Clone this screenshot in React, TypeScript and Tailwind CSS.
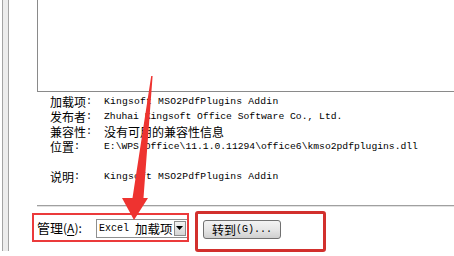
import React from 'react';

const Cjk: React.FC<{ children: React.ReactNode }> = ({ children }) => (
  <span className="inline-block h-[15px] leading-[15px] overflow-hidden align-top font-['Noto_Sans_CJK_SC',sans-serif] text-[12px]">
    {children}
  </span>
);

interface DetailRow {
  label: string;
  value: React.ReactNode;
  wide?: boolean;
}

const rows: (DetailRow | null)[] = [
  { label: '加载项', value: 'Kingsoft MSO2PdfPlugins Addin', wide: true },
  { label: '发布者', value: 'Zhuhai Kingsoft Office Software Co., Ltd.' },
  { label: '兼容性', value: <Cjk>没有可用的兼容性信息</Cjk> },
  { label: '位置', value: 'E:\\WPS Office\\11.1.0.11294\\office6\\kmso2pdfplugins.dll' },
  null,
  { label: '说明', value: 'Kingsoft MSO2PdfPlugins Addin', wide: true },
];

const App: React.FC = () => {
  return (
    <div className="relative w-[454px] h-[256px] overflow-hidden bg-white flex text-black">
      {/* window frame strip */}
      <div className="ml-[2px] w-[7px] h-[251px] shrink-0 border-x border-[#a3a3a3] bg-[#ececec]" />

      <div className="flex-1 min-w-0 flex flex-col">
        {/* add-in list */}
        <div className="ml-[28px] h-[92px] w-[440px] shrink-0 border-l border-b border-[#8a8a8a] bg-white" />

        {/* details */}
        <div className="ml-[41px] mt-[2px] flex flex-col">
          {rows.map((row, idx) =>
            row ? (
              <div key={idx} className="flex items-center h-[15px] leading-[15px] whitespace-nowrap overflow-hidden">
                <div className="w-[54px] shrink-0 flex items-center">
                  <Cjk>{row.label}</Cjk>
                  <span className="font-['Liberation_Mono',monospace] text-[10px]">:</span>
                </div>
                <div
                  className={`font-['Liberation_Mono',monospace] text-[9.7px] ${
                    row.wide ? 'tracking-[0.2px]' : ''
                  }`}
                >
                  {row.value}
                </div>
              </div>
            ) : (
              <div key={idx} className="h-[15px]" />
            )
          )}
        </div>

        {/* separator */}
        <div className="ml-[28px] mt-[21px] w-[440px] h-[2px] shrink-0 border-t border-[#a0a0a0] bg-[#e2e2e2]" />

        {/* manage row */}
        <div className="ml-[28px] mt-[11px] flex items-center h-[20px] whitespace-nowrap">
          <div className="w-[59px] shrink-0 font-['Noto_Sans_CJK_SC',sans-serif] text-[13px] leading-[20px]">
            管理<span className="text-[12px]">(<span className="underline underline-offset-2">A</span>):</span>
          </div>
          <div className="w-[92px] h-[19px] shrink-0 flex border border-[#8e8f8f] bg-white">
            <div className="flex-1 flex items-center pl-[2px] leading-[17px]">
              <span className="font-['Liberation_Mono',monospace] text-[10px]">Excel&nbsp;</span>
              <span className="font-['Noto_Sans_CJK_SC',sans-serif] text-[12.5px]">加载项</span>
            </div>
            <div className="w-[16px] m-[1px] flex items-center justify-center border border-[#8c8c8c] bg-gradient-to-b from-[#f4f4f4] to-[#d4d4d4]">
              <svg width="7" height="4" viewBox="0 0 7 4">
                <path d="M0 0h7L3.5 4z" fill="#000" />
              </svg>
            </div>
          </div>
          <div className="ml-[15px] mt-[2px] w-[78px] h-[19px] shrink-0 flex items-center justify-center rounded-[3px] border border-[#707070] bg-gradient-to-b from-[#f3f3f3] via-[#e6e6e6] to-[#cfcfcf] leading-[17px]">
            <span className="font-['Noto_Sans_CJK_SC',sans-serif] text-[12px]">转到</span>
            <span className="font-['Liberation_Mono',monospace] text-[10px]">(G)...</span>
          </div>
        </div>
      </div>

      {/* annotation boxes */}
      <div className="absolute left-[32px] top-[213px] w-[157px] h-[29px] border-[2.5px] border-[#eb3a3b]" />
      <div className="absolute left-[195px] top-[211px] w-[131px] h-[41px] rounded-[3px] border-[3px] border-[#d2302d]" />

      {/* annotation arrow */}
      <svg className="absolute left-0 top-0" width="454" height="256" viewBox="0 0 454 256">
        <polygon
          points="151.2,76 152.6,76 143.5,198 148,198 134,220 122,198 132.5,198"
          fill="#ee3330"
        />
      </svg>
    </div>
  );
};

export default App;
